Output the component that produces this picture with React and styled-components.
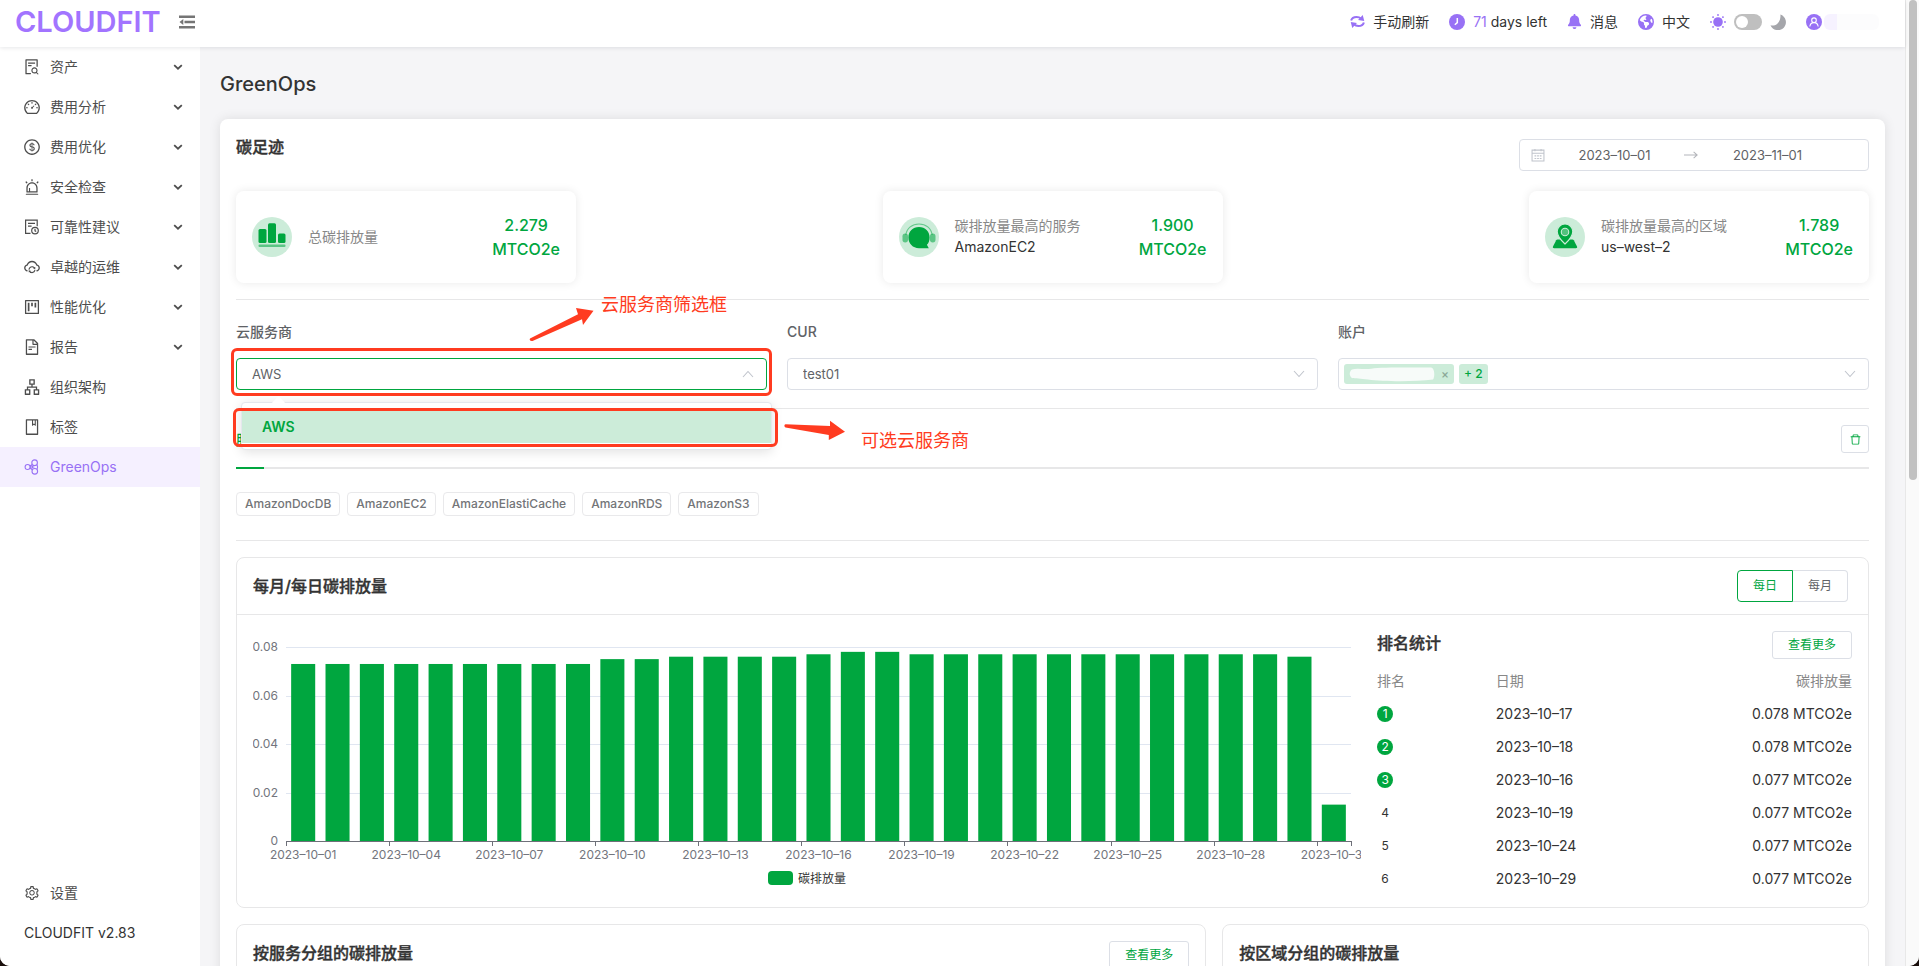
import React, { useLayoutEffect, useRef, useState } from "react";
import styled, { createGlobalStyle, css } from "styled-components";
import {
  AiOutlineAlert,
  AiOutlineApartment,
  AiOutlineBook,
  AiOutlineCloudSync,
  AiOutlineDashboard,
  AiOutlineDelete,
  AiOutlineDollar,
  AiOutlineFileSearch,
  AiOutlineFileText,
  AiOutlineProject,
  AiOutlineSetting,
} from "react-icons/ai";
import { FaBell, FaEarthAmericas } from "react-icons/fa6";

const GREEN = "#00a63f";
const PALE_GREEN = "#ccecd9";
const PURPLE = "#9871f5";
const RED = "#ff3b20";
const LINE = "#e7e7e8";
const FIELD = "#dcdfe6";

const GlobalStyle = createGlobalStyle`
  * { box-sizing: border-box; }
  body {
    margin: 0;
    background: #1a0f0c;
    color: #333;
    font-family: Inter, "Noto Sans CJK SC", sans-serif;
    font-size: 14px;
    line-height: 20px;
  }
  button, input, select { font: inherit; color: inherit; margin: 0; }
  button { cursor: pointer; }
  ul { list-style: none; margin: 0; padding: 0; }
  h1, h2, h3, p { margin: 0; }
`;

const Shell = styled.div`
  display: flex;
  height: 100vh;
  overflow: hidden;
  background: #fff;
  border-radius: 0 0 10px 10px;
`;

const AppColumn = styled.div`
  flex: 1;
  min-width: 0;
  display: flex;
  flex-direction: column;
`;

const ScrollTrack = styled.div`
  width: 14px;
  padding: 0 2px 0 3px;
  background: #fafafa;
  border-left: 1px solid #e8e8e8;
`;

const ScrollThumb = styled.div`
  height: 480px;
  background: #c1c1c1;
  border-radius: 4px;
`;

/* Header */

const Header = styled.header`
  position: relative;
  z-index: 2;
  flex: none;
  display: flex;
  align-items: center;
  height: 47px;
  padding: 0 26px 4px 15px;
  background: #fff;
  box-shadow: 0 1px 4px rgba(0, 21, 41, 0.1);
`;

const Logo = styled.a`
  color: #a274ff;
  font-size: 29px;
  line-height: 32px;
  font-weight: 600;
  text-decoration: none;
`;

const FoldButton = styled.button`
  display: flex;
  margin-left: 18px;
  padding: 0;
  border: 0;
  background: none;
  color: #757575;
`;

const HeaderTools = styled.div`
  display: flex;
  align-items: center;
  gap: 20px;
  margin-left: auto;
`;

const Tool = styled.button`
  display: flex;
  align-items: center;
  gap: 8px;
  padding: 0;
  border: 0;
  background: none;
  white-space: nowrap;
  svg { color: ${PURPLE}; }
`;

const Days = styled.span`
  color: ${PURPLE};
`;

const ThemeSwitch = styled.label`
  display: flex;
  align-items: center;
  gap: 8px;
`;

const SwitchInput = styled.input`
  appearance: none;
  width: 28px;
  height: 16px;
  padding: 2px;
  background: #bfbfbf;
  border-radius: 8px;
  &::before {
    content: "";
    display: block;
    width: 12px;
    height: 12px;
    background: #fff;
    border-radius: 50%;
  }
  &:checked::before { margin-left: 12px; }
`;

const HiddenName = styled.span`
  width: 55px;
  height: 16px;
  margin-left: -6px;
  border-radius: 6px;
  background: linear-gradient(90deg, #f6f2ff 0 13px, #fcfcfd 13px);
`;

/* Sidebar */

const Body = styled.div`
  flex: 1;
  min-height: 0;
  display: flex;
`;

const Sidebar = styled.nav`
  flex: none;
  display: flex;
  flex-direction: column;
  width: 200px;
  background: #fff;
`;

const MenuLink = styled.a`
  display: flex;
  align-items: center;
  gap: 9px;
  height: 40px;
  padding: 0 16px 0 23px;
  color: ${(p) => (p.$active ? PURPLE : "#4d4d4d")};
  background: ${(p) => (p.$active ? "#f5f0ff" : "none")};
  text-decoration: none;
`;

const MenuIcon = styled.span`
  flex: none;
  display: flex;
  justify-content: center;
  width: 18px;
`;

const MenuText = styled.span`
  flex: 1;
`;

const SidebarFoot = styled.div`
  margin-top: auto;
  padding-bottom: 13px;
`;

const Version = styled.p`
  height: 40px;
  padding-left: 24px;
  line-height: 40px;
`;

/* Page */

const Main = styled.main`
  flex: 1;
  min-width: 0;
  padding: 24px 20px 0;
  overflow: hidden;
  background: #f5f5f7;
`;

const PageTitle = styled.h1`
  margin-bottom: 22px;
  font-size: 20px;
  line-height: 26px;
  font-weight: 500;
`;

const Panel = styled.section`
  padding: 16px;
  background: #fff;
  border-radius: 8px;
  box-shadow: 0 0 12px rgba(0, 0, 0, 0.1);
`;

const PanelHead = styled.div`
  display: flex;
  justify-content: space-between;
`;

const Heading = styled.h2`
  font-size: 16px;
  line-height: 24px;
  font-weight: 500;
  -webkit-text-stroke: 0.4px #333;
`;

const DateRange = styled.div`
  display: flex;
  align-items: center;
  width: 350px;
  height: 32px;
  margin-top: 4px;
  padding: 0 11px;
  border: 1px solid ${FIELD};
  border-radius: 4px;
`;

const DateInput = styled.input`
  flex: 1;
  min-width: 0;
  padding: 0;
  border: 0;
  outline: 0;
  background: none;
  color: #606266;
  font-size: 13px;
  text-align: center;
`;

const ClearSlot = styled.span`
  width: 20px;
`;

const StatRow = styled.div`
  display: flex;
  justify-content: space-between;
  gap: 20px;
  padding: 20px 0 16px;
  border-bottom: 1px solid ${LINE};
`;

const StatCard = styled.article`
  display: flex;
  align-items: center;
  gap: 16px;
  width: 340px;
  height: 92px;
  padding: 0 16px;
  border-radius: 8px;
  box-shadow: 0 0 10px rgba(0, 0, 0, 0.09);
`;

const StatText = styled.div`
  flex: 1;
  padding-bottom: 2px;
  line-height: 21px;
`;

const StatLabel = styled.p`
  color: #888;
`;

const StatValue = styled.p`
  color: ${GREEN};
  font-size: 16px;
  line-height: 24px;
  font-weight: 500;
  text-align: center;
`;

const Filters = styled.div`
  display: grid;
  grid-template-columns: repeat(3, 1fr);
  gap: 20px;
  padding: 22px 0 18px;
  border-bottom: 1px solid ${LINE};
`;

const Field = styled.div`
  min-width: 0;
`;

const FieldLabel = styled.label`
  display: block;
  margin-bottom: 16px;
  color: #606266;
  font-weight: 500;
`;

const FieldBox = styled.div`
  position: relative;
  display: flex;
  align-items: center;
  height: 32px;
  border: 1px solid ${(p) => (p.$open ? GREEN : FIELD)};
  border-radius: 4px;
`;

const Select = styled.select`
  appearance: none;
  flex: 1;
  min-width: 0;
  height: 30px;
  padding: 0 15px;
  border: 0;
  outline: 0;
  background: none;
  color: #606266;
  font-size: 13px;
`;

const Caret = styled.svg`
  position: absolute;
  right: 12px;
  pointer-events: none;
`;

const Chip = styled.span`
  display: flex;
  align-items: center;
  justify-content: space-between;
  gap: 6px;
  height: 20px;
  margin-left: 5px;
  padding: 0 5px;
  color: ${GREEN};
  background: ${PALE_GREEN};
  border-radius: 3px;
  font-size: 12px;
  font-weight: 500;
`;

const ChipClose = styled.button`
  padding: 0;
  border: 0;
  background: none;
  color: #8aa896;
  line-height: 12px;
`;

const Dropdown = styled.ul`
  position: absolute;
  z-index: 1;
  top: 43px;
  left: 4px;
  right: -6px;
  padding: 7px 0 6px;
  background: #fff;
  border: 1px solid #e4e7ed;
  border-radius: 4px;
  box-shadow: 0 2px 12px rgba(0, 0, 0, 0.12);
  &::before {
    content: "";
    position: absolute;
    top: -5px;
    left: 32px;
    width: 9px;
    height: 9px;
    background: #fff;
    transform: rotate(45deg);
  }
`;

const Option = styled.li`
  height: 33px;
  padding: 0 20px;
  color: ${GREEN};
  background: ${PALE_GREEN};
  font-weight: 600;
  line-height: 33px;
`;

const Mark = styled.div`
  position: absolute;
  z-index: 2;
  border: 3px solid ${RED};
  border-radius: 6px;
  pointer-events: none;
  ${(p) =>
    p.$around === "field"
      ? css`top: -11px; right: -6px; bottom: -7px; left: -6px;`
      : css`top: 49px; right: -12px; left: -4px; height: 39px;`}
`;

const Arrow = styled.svg`
  position: absolute;
  z-index: 2;
  top: ${(p) => p.$top}px;
  left: ${(p) => p.$left};
`;

const Note = styled.span`
  position: absolute;
  z-index: 2;
  top: ${(p) => p.$top}px;
  left: ${(p) => p.$left};
  color: ${RED};
  font-size: 18px;
  line-height: 24px;
  white-space: nowrap;
`;

const Tabs = styled.div`
  display: flex;
  justify-content: space-between;
  align-items: flex-start;
  height: 60px;
  padding-top: 16px;
  border-bottom: 2px solid ${LINE};
`;

const Tab = styled.button`
  height: 44px;
  padding: 0 0 12px;
  border: 0;
  border-bottom: 2px solid ${GREEN};
  background: none;
  color: ${GREEN};
  font-weight: 500;
`;

const IconButton = styled.button`
  display: flex;
  align-items: center;
  justify-content: center;
  width: 28px;
  height: 28px;
  padding: 0;
  border: 1px solid ${FIELD};
  border-radius: 3px;
  background: #fff;
  color: ${GREEN};
`;

const TagRow = styled.ul`
  display: flex;
  gap: 7px;
  padding: 23px 0 24px;
  border-bottom: 1px solid ${LINE};
`;

const Tag = styled.li`
  height: 24px;
  padding: 0 8px;
  border: 1px solid #e9e9eb;
  border-radius: 4px;
  color: #737578;
  font-size: 12px;
  font-weight: 500;
  line-height: 22px;
`;

const Card = styled.section`
  margin-top: 16px;
  border: 1px solid ${LINE};
  border-radius: 8px;
`;

const CardHead = styled.div`
  display: flex;
  align-items: ${(p) => (p.$top ? "flex-start" : "center")};
  justify-content: space-between;
  height: 57px;
  padding: ${(p) => (p.$top ? "16px 16px 0" : "0 20px 0 16px")};
  border-bottom: 1px solid ${LINE};
`;

const Segments = styled.div`
  display: flex;
`;

const Segment = styled.button`
  height: 32px;
  padding: 0 15px;
  border: 1px solid ${(p) => (p.$on ? GREEN : FIELD)};
  border-left-width: ${(p) => (p.$on ? 1 : 0)}px;
  border-radius: ${(p) => (p.$on ? "4px 0 0 4px" : "0 4px 4px 0")};
  background: #fff;
  color: ${(p) => (p.$on ? GREEN : "#606266")};
  font-size: 12px;
`;

const MoreButton = styled.button`
  height: 28px;
  padding: 0 15px;
  border: 1px solid ${FIELD};
  border-radius: 3px;
  background: #fff;
  color: ${GREEN};
  font-size: 12px;
`;

const EmissionBody = styled.div`
  display: grid;
  grid-template-columns: 7fr 3fr;
  gap: 16px;
  padding: 16px 16px 12px;
`;

const ChartBox = styled.div`
  min-width: 0;
`;

const ChartSvg = styled.svg`
  display: block;
  width: 100%;
  overflow: hidden;
  font-size: 12px;
`;

const RankHead = styled.div`
  display: flex;
  align-items: flex-start;
  justify-content: space-between;
  margin-bottom: 5px;
`;

const RankTable = styled.table`
  width: 100%;
  table-layout: fixed;
  border-collapse: collapse;
  th, td {
    height: 33px;
    padding: 0;
    font-weight: 400;
    text-align: left;
  }
  th { color: #888; }
  th:first-child { width: 25%; }
  th:last-child, td:last-child { text-align: right; }
`;

const Rank = styled.span`
  display: block;
  width: 16px;
  height: 16px;
  border-radius: 50%;
  background: ${(p) => (p.$top ? GREEN : "none")};
  color: ${(p) => (p.$top ? "#fff" : "inherit")};
  font-size: 12px;
  line-height: 16px;
  text-align: center;
`;

const CardPair = styled.div`
  display: grid;
  grid-template-columns: 3fr 2fr;
  gap: 16px;
`;

const CardSpace = styled.div`
  height: 320px;
`;

/* Drawings */

const Line = ({ size = 16, children, box = 16, ...rest }) => (
  <svg width={size} height={size} viewBox={`0 0 ${box} ${box}`} fill="none" stroke="currentColor" strokeWidth="1.2" aria-hidden="true" {...rest}>
    {children}
  </svg>
);

const FoldIcon = () => (
  <svg width="16" height="16" viewBox="0 0 16 16" fill="currentColor" aria-hidden="true">
    <path d="M0 1.500h16V4H0zM5.500 6.800H16v2.400H5.500zM0 12h16v2.500H0zM4.300 5v6L.5 8z" />
  </svg>
);

const FileClockIcon = () => (
  <Line>
    <path d="M6.5 14.4H1.6V1.1h11.6v6.2M4 4.3h7M4 7.2h3.6" />
    <circle cx="11" cy="11.6" r="3.3" />
    <path d="M11 9.8v2l1.2.7" />
  </Line>
);

const MoleculeIcon = () => (
  <Line strokeWidth="1.1">
    <circle cx="3.6" cy="8" r="2.5" />
    <circle cx="10.6" cy="3.7" r="2.8" />
    <circle cx="10.8" cy="12.3" r="2.8" />
    <path d="M5.800 6.900 8.300 5.500M5.800 9.100l2.600 1.600M8 8h2.400M13 5.400c.7 1.500.7 3.600 0 5.200" />
    <circle cx="7.6" cy="8" r="1.1" />
  </Line>
);

const Chevron = () => (
  <Line size={12} box={12} strokeWidth="1.8">
    <path d="M2.2 4.2 6 7.7l3.8-3.5" />
  </Line>
);

const SyncIcon = () => (
  <Line size={15} strokeWidth="2.200">
    <path d="M1.200 7C2 4.200 4.300 3.200 7 3.200c2 0 3.500.5 5 1.800M14.800 9C14 11.800 11.700 12.800 9 12.800c-2 0-3.500-.5-5-1.800" />
    <path d="M13.600 1l1.600 6.400-6.600-.9zM2.400 15 .8 8.600l6.600.9z" fill="currentColor" stroke="none" />
  </Line>
);

const ClockIcon = () => (
  <svg width="16" height="16" viewBox="0 0 16 16" aria-hidden="true">
    <circle cx="8" cy="8" r="8" fill="currentColor" />
    <path d="M8.300 4v4.600L5.800 10.800" fill="none" stroke="#fff" strokeWidth="1.500" />
  </svg>
);

const SunIcon = () => (
  <svg width="16" height="16" viewBox="0 0 16 16" fill={PURPLE} aria-hidden="true">
    <circle cx="8" cy="8" r="4.800" />
    {[0, 45, 90, 135, 180, 225, 270, 315].map((a) => (
      <circle key={a} cx="8" cy="1" r="0.900" transform={`rotate(${a} 8 8)`} />
    ))}
  </svg>
);

const MoonIcon = () => (
  <svg width="16" height="16" viewBox="0 0 16 16" fill="#a5a6ab" aria-hidden="true">
    <path d="M10.400.6A8 8 0 1 1 .5 11.200c5.200 1.600 10.700-3 9.900-10.600z" />
  </svg>
);

const UserIcon = () => (
  <svg width="16" height="16" viewBox="0 0 16 16" aria-hidden="true">
    <circle cx="8" cy="8" r="8" fill="currentColor" />
    <g fill="none" stroke="#fff" strokeWidth="1.100">
      <circle cx="8" cy="6.200" r="2.300" />
      <path d="M3.800 12.500c.4-2.600 2-3.900 4.200-3.900s3.800 1.300 4.200 3.900" />
    </g>
  </svg>
);

const CalendarIcon = () => (
  <Line size={14} stroke="#c0c4cc" strokeWidth="1.200">
    <path d="M1.200 2.400h13.600v12.400H1.200zM1.200 5.900h13.600M4.500 1v2.600M11.500 1v2.600" />
    <path d="M4 9h2M7 9h2M10 9h2M4 12h2M7 12h2M10 12h2" />
  </Line>
);

const ChartStatIcon = () => (
  <svg width="40" height="40" viewBox="0 0 40 40" fill={GREEN} aria-hidden="true">
    <circle cx="20" cy="20" r="20" fill={PALE_GREEN} />
    <rect x="6.500" y="12" width="8" height="14" rx="1.500" />
    <rect x="16" y="6.200" width="8" height="19.800" rx="1.500" />
    <rect x="26" y="16.500" width="7.500" height="9.500" rx="1.500" />
    <rect x="6.500" y="27.500" width="27" height="2.600" rx="1" opacity="0.550" />
  </svg>
);

const HeadsetStatIcon = () => (
  <svg width="40" height="40" viewBox="0 0 40 40" fill={GREEN} aria-hidden="true">
    <circle cx="20" cy="20" r="20" fill={PALE_GREEN} />
    <path d="M6.800 18C7.800 11 13.200 7 20 7s12.200 4 13.200 11" fill="none" stroke={GREEN} strokeWidth="1.200" opacity="0.500" />
    <rect x="3.500" y="16.500" width="5.500" height="9" rx="2.700" opacity="0.550" />
    <rect x="31" y="16.500" width="5.500" height="9" rx="2.700" opacity="0.550" />
    <path d="M20 10c6.200 0 10.600 4.500 10.600 10.500 0 3.300-1 5.600-2.700 7.300l1.900 3.400H20c-6.200 0-10.600-4.700-10.600-10.700S13.800 10 20 10z" />
  </svg>
);

const PinStatIcon = () => (
  <svg width="40" height="40" viewBox="0 0 40 40" fill={GREEN} aria-hidden="true">
    <circle cx="20" cy="20" r="20" fill={PALE_GREEN} />
    <path d="M12.500 22.500h15c.6 0 1 .3 1.300.8l3.200 6.200c.5 1-.1 1.700-1.100 1.700H9.100c-1 0-1.600-.7-1.100-1.700l3.200-6.200c.3-.5.700-.8 1.300-.8z" />
    <path d="M20 7c4.500 0 7.800 3.400 7.800 7.600 0 4.400-3.600 8.600-7.800 12.400-4.200-3.800-7.800-8-7.800-12.400C12.200 10.400 15.500 7 20 7z" stroke={PALE_GREEN} strokeWidth="1.200" />
    <circle cx="20" cy="15" r="4.300" fill={PALE_GREEN} />
    <circle cx="20" cy="15" r="3.200" opacity="0.600" />
  </svg>
);

const SelectCaret = ({ up }) => (
  <Caret width="12" height="12" viewBox="0 0 12 12" fill="none" stroke="#c0c4cc" strokeWidth="1.100" aria-hidden="true">
    <path d={up ? "M1 9 6 3.500 11 9" : "M1 3 6 8.500 11 3"} />
  </Caret>
);

/* Data */

const MENU = [
  ["资产", AiOutlineFileSearch, true],
  ["费用分析", AiOutlineDashboard, true],
  ["费用优化", AiOutlineDollar, true],
  ["安全检查", AiOutlineAlert, true],
  ["可靠性建议", FileClockIcon, true],
  ["卓越的运维", AiOutlineCloudSync, true],
  ["性能优化", AiOutlineProject, true],
  ["报告", AiOutlineFileText, true],
  ["组织架构", AiOutlineApartment, false],
  ["标签", AiOutlineBook, false],
  ["GreenOps", MoleculeIcon, false],
];

const STATS = [
  { icon: ChartStatIcon, label: "总碳排放量", value: "2.279" },
  { icon: HeadsetStatIcon, label: "碳排放量最高的服务", name: "AmazonEC2", value: "1.900" },
  { icon: PinStatIcon, label: "碳排放量最高的区域", name: "us–west–2", value: "1.789" },
];

const SERVICES = ["AmazonDocDB", "AmazonEC2", "AmazonElastiCache", "AmazonRDS", "AmazonS3"];

const EMISSIONS = [
  ...Array(9).fill(0.073),
  ...Array(2).fill(0.075),
  ...Array(4).fill(0.076),
  0.077, 0.078, 0.078,
  ...Array(11).fill(0.077),
  0.076, 0.015,
];

const RANKING = [
  ["2023–10–17", "0.078"],
  ["2023–10–18", "0.078"],
  ["2023–10–16", "0.077"],
  ["2023–10–19", "0.077"],
  ["2023–10–24", "0.077"],
  ["2023–10–29", "0.077"],
];

function EmissionChart() {
  const box = useRef(null);
  const [width, setWidth] = useState(1100);

  useLayoutEffect(() => {
    const measure = () => setWidth(box.current.clientWidth);
    measure();
    const observer = new ResizeObserver(measure);
    observer.observe(box.current);
    return () => observer.disconnect();
  }, []);

  const left = 33;
  const right = width - 10;
  const base = 210;
  const plot = 194;
  const slot = (right - left) / EMISSIONS.length;
  const levels = [0, 0.02, 0.04, 0.06, 0.08];
  const y = (v) => base - (v / 0.08) * plot;
  const mid = width / 2;

  return (
    <ChartBox ref={box}>
      <ChartSvg height="264" role="img" aria-label="每日碳排放量">
        {levels.map((v) => (
          <g key={v}>
            {v > 0 && <line x1={left} x2={right} y1={Math.round(y(v)) + 0.5} y2={Math.round(y(v)) + 0.5} stroke="#e0e6f1" />}
            <text x="25" y={y(v) + 4} textAnchor="end" fill="#73757d">{v}</text>
          </g>
        ))}
        {EMISSIONS.map((v, i) => (
          <rect key={i} x={left + slot * (i + 0.15)} y={y(v)} width={slot * 0.7} height={base - y(v)} fill={GREEN} />
        ))}
        <path d={`M${left} ${base + 0.5}H${right + 1}`} stroke="#6e7079" />
        {EMISSIONS.map((v, i) =>
          i % 3 === 0 ? (
            <g key={i}>
              <path d={`M${Math.round(left + slot * i) + 0.5} ${base}v5`} stroke="#6e7079" />
              <text x={left + slot * (i + 0.5)} y="228" textAnchor="middle" fill="#73757d">
                {`2023–10–${String(i + 1).padStart(2, "0")}`}
              </text>
            </g>
          ) : null
        )}
        <path d={`M${right + 0.5} ${base}v5`} stroke="#6e7079" />
        <rect x={mid - 39} y="240" width="25" height="14" rx="4" fill={GREEN} />
        <text x={mid - 9} y="252" fill="#333">碳排放量</text>
      </ChartSvg>
    </ChartBox>
  );
}

export default function App() {
  return (
    <>
      <GlobalStyle />
      <Shell>
        <AppColumn>
          <Header>
            <Logo href="#">CLOUDFIT</Logo>
            <FoldButton aria-label="收起菜单"><FoldIcon /></FoldButton>
            <HeaderTools>
              <Tool><SyncIcon />手动刷新</Tool>
              <Tool><ClockIcon /><span><Days>71</Days> days left</span></Tool>
              <Tool><FaBell size={15} />消息</Tool>
              <Tool><FaEarthAmericas size={16} />中文</Tool>
              <ThemeSwitch>
                <SunIcon />
                <SwitchInput type="checkbox" role="switch" aria-label="深色模式" />
                <MoonIcon />
              </ThemeSwitch>
              <Tool aria-label="用户"><UserIcon /><HiddenName /></Tool>
            </HeaderTools>
          </Header>
          <Body>
            <Sidebar>
              {MENU.map(([text, Icon, more]) => (
                <MenuLink key={text} href="#" $active={text === "GreenOps"}>
                  <MenuIcon><Icon size={18} /></MenuIcon>
                  <MenuText>{text}</MenuText>
                  {more && <Chevron />}
                </MenuLink>
              ))}
              <SidebarFoot>
                <MenuLink href="#">
                  <MenuIcon><AiOutlineSetting size={16} /></MenuIcon>
                  <MenuText>设置</MenuText>
                </MenuLink>
                <Version>CLOUDFIT v2.83</Version>
              </SidebarFoot>
            </Sidebar>
            <Main>
              <PageTitle>GreenOps</PageTitle>
              <Panel>
                <PanelHead>
                  <Heading>碳足迹</Heading>
                  <DateRange>
                    <CalendarIcon />
                    <DateInput aria-label="开始日期" defaultValue="2023–10–01" />
                    <Line size={14} stroke="#b4b6bb"><path d="M0 8h15M11 4.500 15 8l-4 3.500" /></Line>
                    <DateInput aria-label="结束日期" defaultValue="2023–11–01" />
                    <ClearSlot />
                  </DateRange>
                </PanelHead>
                <StatRow>
                  {STATS.map(({ icon: Icon, label, name, value }) => (
                    <StatCard key={label}>
                      <Icon />
                      <StatText>
                        <StatLabel>{label}</StatLabel>
                        {name && <p>{name}</p>}
                      </StatText>
                      <StatValue>{value}<br />MTCO2e</StatValue>
                    </StatCard>
                  ))}
                </StatRow>
                <Filters>
                  <Field>
                    <FieldLabel htmlFor="vendor">云服务商</FieldLabel>
                    <FieldBox $open>
                      <Select id="vendor"><option>AWS</option></Select>
                      <SelectCaret up />
                      <Dropdown role="listbox">
                        <Option role="option" aria-selected="true">AWS</Option>
                      </Dropdown>
                      <Mark $around="field" />
                      <Mark $around="option" />
                      <Arrow $top={-53} $left="292px" width="68" height="36" fill={RED} aria-hidden="true">
                        <path d="M1 32.500 49 8.300 47 2 64.500 4.700 54 19l-1-5.700L3.500 35C1.500 35.500 0 34 1 32.500z" />
                      </Arrow>
                      <Note $top={-66} $left="364px">云服务商筛选框</Note>
                      <Arrow $top={61} $left="calc(100% + 18px)" width="64" height="22" fill={RED} aria-hidden="true">
                        <path d="M1.500 4.300 46 6V.7L61 11.700 44.800 20v-5L1.500 7.500C0 7 0 4.500 1.500 4.300z" />
                      </Arrow>
                      <Note $top={70} $left="calc(100% + 95px)">可选云服务商</Note>
                    </FieldBox>
                  </Field>
                  <Field>
                    <FieldLabel htmlFor="cur">CUR</FieldLabel>
                    <FieldBox>
                      <Select id="cur"><option>test01</option></Select>
                      <SelectCaret />
                    </FieldBox>
                  </Field>
                  <Field>
                    <FieldLabel as="p">账户</FieldLabel>
                    <FieldBox>
                      <Chip>
                        <svg width="86" height="16" viewBox="0 0 86 16" aria-hidden="true">
                          <path d="M3 3.500C8 2 14 3.500 20 3c8-2 30-1.600 62-1.500 4 .5 4 10 2 12-20 2.500-50 2-65 0C12 12.500 6 12.500 3 12 0 10 0 5.500 3 3.500z" fill="#f7fbf9" />
                        </svg>
                        <ChipClose aria-label="移除账户">×</ChipClose>
                      </Chip>
                      <Chip>+ 2</Chip>
                      <SelectCaret />
                    </FieldBox>
                  </Field>
                </Filters>
                <Tabs>
                  <Tab>服务</Tab>
                  <IconButton aria-label="清空"><AiOutlineDelete size={13} /></IconButton>
                </Tabs>
                <TagRow>
                  {SERVICES.map((s) => <Tag key={s}>{s}</Tag>)}
                </TagRow>
                <Card>
                  <CardHead>
                    <Heading>每月/每日碳排放量</Heading>
                    <Segments>
                      <Segment $on>每日</Segment>
                      <Segment>每月</Segment>
                    </Segments>
                  </CardHead>
                  <EmissionBody>
                    <EmissionChart />
                    <div>
                      <RankHead>
                        <Heading as="h3">排名统计</Heading>
                        <MoreButton>查看更多</MoreButton>
                      </RankHead>
                      <RankTable>
                        <thead>
                          <tr><th>排名</th><th>日期</th><th>碳排放量</th></tr>
                        </thead>
                        <tbody>
                          {RANKING.map(([date, amount], i) => (
                            <tr key={date}>
                              <td><Rank $top={i < 3}>{i + 1}</Rank></td>
                              <td>{date}</td>
                              <td>{amount} MTCO2e</td>
                            </tr>
                          ))}
                        </tbody>
                      </RankTable>
                    </div>
                  </EmissionBody>
                </Card>
                <CardPair>
                  <Card>
                    <CardHead $top>
                      <Heading>按服务分组的碳排放量</Heading>
                      <MoreButton>查看更多</MoreButton>
                    </CardHead>
                    <CardSpace />
                  </Card>
                  <Card>
                    <CardHead $top>
                      <Heading>按区域分组的碳排放量</Heading>
                    </CardHead>
                    <CardSpace />
                  </Card>
                </CardPair>
              </Panel>
            </Main>
          </Body>
        </AppColumn>
        <ScrollTrack><ScrollThumb /></ScrollTrack>
      </Shell>
    </>
  );
}
